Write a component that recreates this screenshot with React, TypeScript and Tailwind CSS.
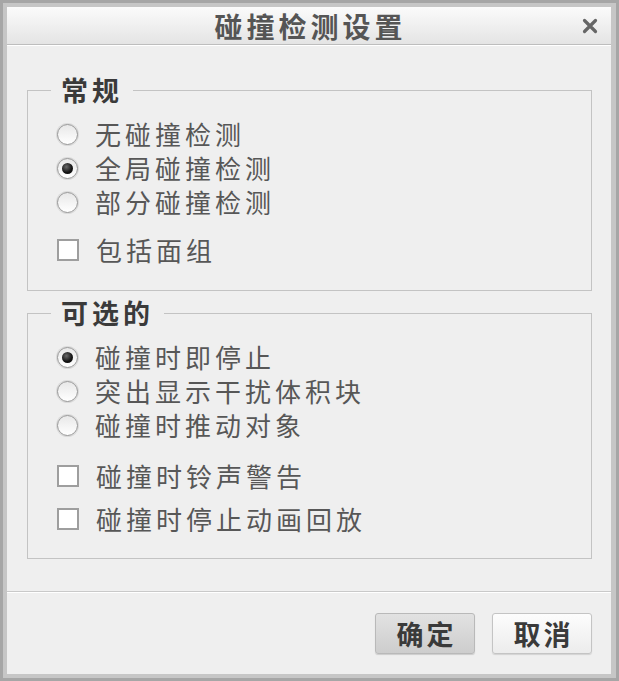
import React from "react";

const FONT = { fontFamily: '"Noto Sans CJK SC", "Noto Sans", sans-serif' };

function Radio({ checked, label }: { checked?: boolean; label: string }) {
  return (
    <div className="flex h-[34px] items-center">
      <span className="flex h-[21px] w-[21px] items-center justify-center rounded-full border border-[#979797] bg-gradient-to-b from-[#e8e8e8] to-white shadow-[0_0_0_1px_#dadada]">
        {checked && (
          <span className="h-[11px] w-[11px] rounded-full bg-[radial-gradient(circle_at_40%_35%,#6a6a6a,#111_60%)]" />
        )}
      </span>
      <span className="ml-[17px] text-[26px] leading-none tracking-[4px] text-[#575757]">{label}</span>
    </div>
  );
}

function Check({ label }: { label: string }) {
  return (
    <div className="flex h-[34px] items-center">
      <span className="h-[22px] w-[22px] border-2 border-[#9e9e9e] bg-white" />
      <span className="ml-[17px] text-[26px] leading-none tracking-[4px] text-[#575757]">{label}</span>
    </div>
  );
}

function Group({ title, children, className }: { title: string; children: React.ReactNode; className?: string }) {
  return (
    <fieldset className={"mx-[20px] mr-[19px] border border-[#c3c3c3] pl-[29px] " + (className ?? "")}>
      <legend className="-ml-[6px] px-[10px] text-[27px] font-bold leading-[30px] tracking-[4px] text-[#3a3a3a]">
        {title}
      </legend>
      {children}
    </fieldset>
  );
}

export default function App() {
  return (
    <div style={FONT} className="h-[681px] w-[619px] border-[3px] border-[#a6a6a6] bg-[#c6c6c6] pb-[4px] pl-[4px] pr-[5px] pt-[4px]">
      <div className="flex h-full flex-col bg-[#efefef]">
        <div className="relative flex h-[38px] items-center justify-center border-b border-[#bdbdbd] bg-gradient-to-b from-[#fbfbfb] to-[#e4e4e4]">
          <span className="pl-[3px] text-[28px] font-bold leading-none tracking-[4px] text-[#555]">碰撞检测设置</span>
          <svg className="absolute right-[13px] top-[11px]" width="16" height="16" viewBox="0 0 16 16">
            <path d="M2.5 2.5 L13.5 13.5 M13.5 2.5 L2.5 13.5" stroke="#666" strokeWidth="3.2" strokeLinecap="round" />
          </svg>
        </div>
        <div className="h-px bg-white" />

        <Group title="常规" className="mt-[29px] pb-[23px]">
          <div className="mt-[12px]">
            <Radio label="无碰撞检测" />
            <Radio checked label="全局碰撞检测" />
            <Radio label="部分碰撞检测" />
          </div>
          <div className="mt-[14px]">
            <Check label="包括面组" />
          </div>
        </Group>

        <Group title="可选的" className="mt-[7px] pb-[22px]">
          <div className="mt-[12px]">
            <Radio checked label="碰撞时即停止" />
            <Radio label="突出显示干扰体积块" />
            <Radio label="碰撞时推动对象" />
          </div>
          <div className="mt-[17px] flex flex-col gap-[9px]">
            <Check label="碰撞时铃声警告" />
            <Check label="碰撞时停止动画回放" />
          </div>
        </Group>

        <div className="mt-[32px] h-px bg-[#c9c9c9]" />
        <div className="h-px bg-white" />

        <div className="mr-[19px] mt-[20px] flex justify-end gap-[17px]">
          <button className="flex h-[41px] w-[100px] items-center justify-center rounded-[3px] border border-[#b9b9b9] bg-gradient-to-b from-[#e2e2e2] to-[#cdcdcd] pl-[3px] text-[27px] font-bold leading-none tracking-[3px] text-[#3a3a3a] shadow-[0_1px_1px_rgba(0,0,0,0.15)]">
            确定
          </button>
          <button className="flex h-[41px] w-[100px] items-center justify-center rounded-[3px] border border-[#c4c4c4] bg-gradient-to-b from-[#fdfdfd] to-[#ececec] pl-[3px] text-[27px] font-bold leading-none tracking-[3px] text-[#3a3a3a] shadow-[0_1px_1px_rgba(0,0,0,0.12)]">
            取消
          </button>
        </div>
      </div>
    </div>
  );
}
